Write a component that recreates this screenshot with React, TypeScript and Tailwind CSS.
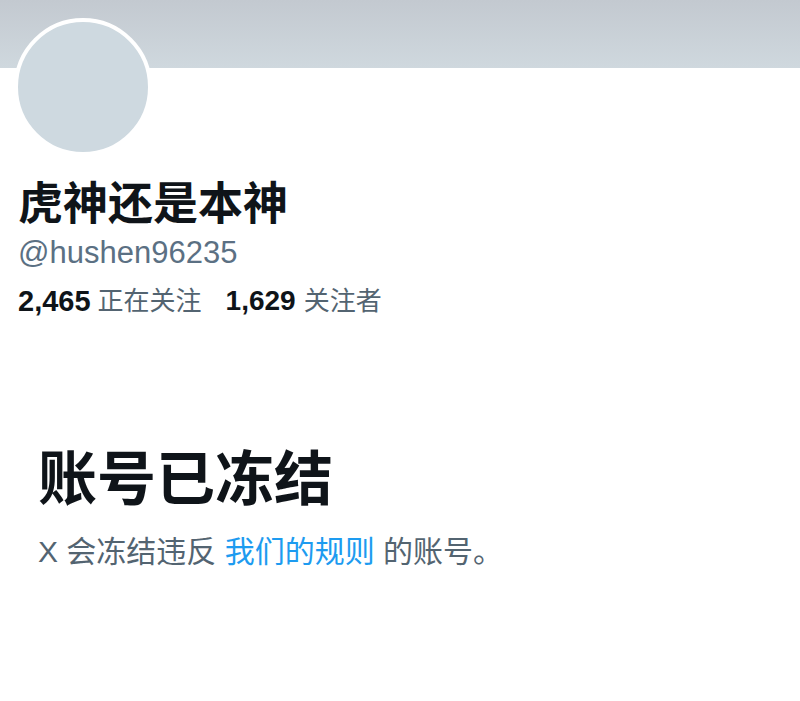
export default function App() {
  const cjk = '"Liberation Sans", "Noto Sans CJK SC", sans-serif';
  return (
    <div className="w-[800px] h-[701px] bg-white overflow-hidden" style={{ fontFamily: cjk }}>
      <div className="h-[68px] bg-gradient-to-b from-[#c3c9d0] to-[#cfd8de]" />
      <div className="px-[14px]">
        <div className="-mt-[50px] w-[138px] h-[138px] rounded-full border-4 border-white bg-[#ced9e0]" />
      </div>
      <div className="px-[18px]">
        <div className="mt-[25px] h-[48px] leading-[48px] text-[45px] font-bold text-[#0f1419]">虎神还是本神</div>
        <div className="mt-[6px] h-[36px] leading-[36px] text-[31px] text-[#5b7083]">@hushen96235</div>
        <div className="mt-[12px] h-[36px] leading-[36px] text-[26px] text-[#536471] flex">
          <span className="font-bold text-[#0f1419] text-[29px]">2,465</span>
          <span className="ml-[7px]">正在关注</span>
          <span className="ml-[24px] font-bold text-[#0f1419] text-[28px]">1,629</span>
          <span className="ml-[8px]">关注者</span>
        </div>
      </div>
      <div className="px-[38px]">
        <div className="mt-[131px] h-[60px] leading-[60px] text-[59px] font-bold text-[#0f1419]">账号已冻结</div>
        <div className="mt-[22px] h-[40px] leading-[40px] text-[30px] text-[#536471]">
          X 会冻结违反 <span className="text-[#1d9bf0]">我们的规则</span> 的账号。
        </div>
      </div>
    </div>
  );
}
